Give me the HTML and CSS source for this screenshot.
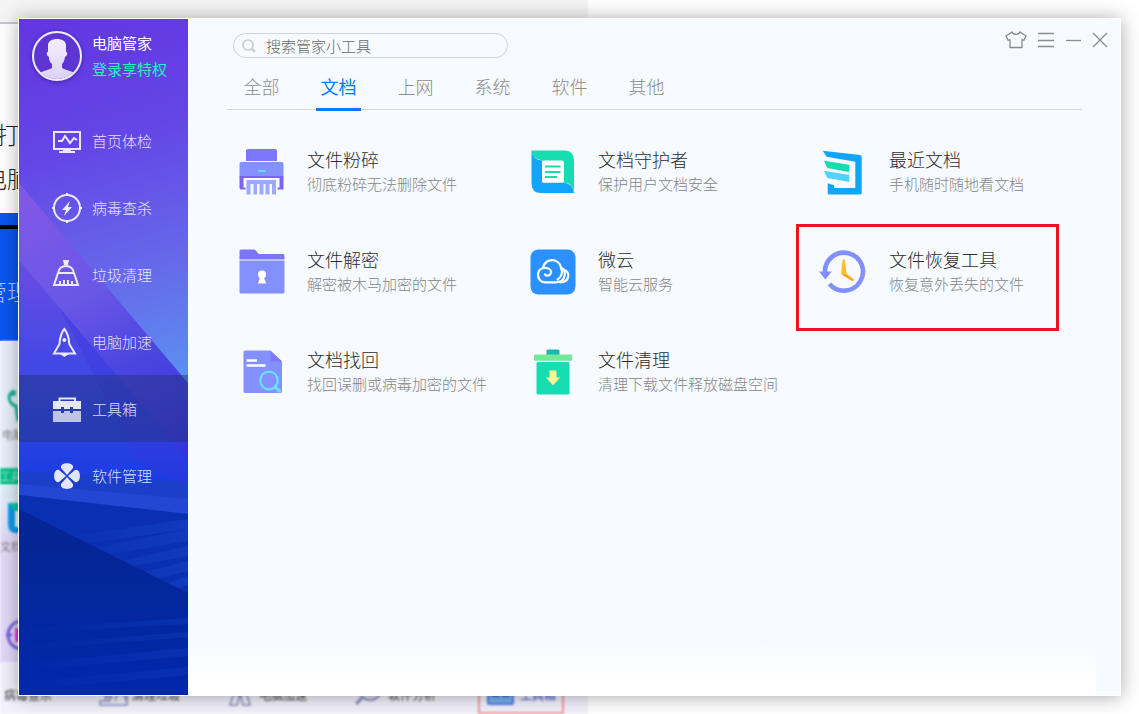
FILE: index.html
```html
<!DOCTYPE html>
<html lang="zh-CN">
<head>
<meta charset="utf-8">
<title>电脑管家</title>
<link rel="stylesheet" href="styles.css">
</head>
<body>
<div class="desktop">
  <div class="backdrop" aria-hidden="true">
    <div class="page">
      <div class="page-head"></div>
      <div class="page-text"><p>打</p><p class="cut">电脑</p></div>
      <div class="page-banner"><span class="cut">管理</span></div>
      <div class="page-card">
        <svg class="scope" width="24" height="36" viewBox="0 0 24 36"><path d="M12 3C7 5 9 14 16 16L18 30H24" fill="none" stroke="#16b295" stroke-width="3"/><circle cx="13" cy="3" r="3" fill="#16b295"/></svg>
        <span>电脑</span>
      </div>
      <div class="page-label"><span>工具</span></div>
      <div class="page-tools">
        <svg class="guard" width="24" height="30" viewBox="0 0 24 30"><path d="M0 0H24V30H8Q0 30 0 21Z" fill="#0e9bee"/><path d="M0 0H24V8H7Z" fill="#0cc9a0"/><path d="M7 8H24V24H7Z" fill="#eafaf8"/><path d="M11 12H24M11 16H24M11 20H24" stroke="#1bc8a4" stroke-width="2"/></svg>
        <span>文档</span>
        <svg class="target" width="24" height="34" viewBox="0 0 24 34"><circle cx="16" cy="17" r="14" fill="none" stroke="#7a62e0" stroke-width="3"/><path d="M0 17H6" stroke="#7a62e0" stroke-width="3"/><path d="M9 10H24V24H9Z" fill="#e735dc"/></svg>
      </div>
      <div class="page-foot">
        <div class="foot-item"><span>病毒查杀</span></div>
        <div class="foot-item"><svg width="30" height="24" viewBox="0 0 30 24"><path d="M8 2V18M12 2V18H2V22H29V6M6 14H15M18 18A5 5 0 1 1 27 18" fill="none" stroke="#8b8fc0" stroke-width="1.5"/></svg><span>清理垃圾</span></div>
        <div class="foot-item"><svg width="27" height="24" viewBox="0 0 27 24"><path d="M8 4L2 22H9L12 11L15 22H22L17 4M9 12H15" fill="none" stroke="#8b8fc0" stroke-width="1.5"/></svg><span>电脑加速</span></div>
        <div class="foot-item"><svg width="30" height="24" viewBox="0 0 30 24"><circle cx="16" cy="6" r="11" fill="none" stroke="#8b8fc0" stroke-width="2"/><circle cx="16" cy="6" r="6" fill="none" stroke="#8b8fc0" stroke-width="2"/><path d="M8 15L2 21" stroke="#8b8fc0" stroke-width="3"/></svg><span>软件分析</span></div>
        <div class="foot-item marked"><svg width="30" height="24" viewBox="0 0 30 24"><rect x="2" y="1" width="25" height="20" rx="1" fill="#79b4ee" stroke="#5a78e8" stroke-width="2"/><path d="M7 10V13H12V9M17 10V13H22V9" fill="none" stroke="#3f5fe0" stroke-width="2"/></svg><span>工具箱</span></div>
      </div>
    </div>
  </div>

  <div class="window">
    <aside class="sidebar">
      <svg class="art" viewBox="0 0 169 676" preserveAspectRatio="none" aria-hidden="true">
        <defs>
          <linearGradient id="sky" gradientUnits="userSpaceOnUse" x1="20" y1="0" x2="130" y2="370"><stop offset="0" stop-color="#6236e2"/><stop offset=".35" stop-color="#6446e6"/><stop offset=".7" stop-color="#6669ea"/><stop offset="1" stop-color="#5b90f0"/></linearGradient>
          <linearGradient id="band" gradientUnits="userSpaceOnUse" x1="0" y1="170" x2="150" y2="450"><stop offset="0" stop-color="#8258e8"/><stop offset=".4" stop-color="#6957e6"/><stop offset=".65" stop-color="#4b45df"/><stop offset="1" stop-color="#3432dc"/></linearGradient>
          <linearGradient id="low" gradientUnits="userSpaceOnUse" x1="0" y1="241" x2="0" y2="470"><stop offset="0" stop-color="#6a4ce4"/><stop offset=".5" stop-color="#3f48e4"/><stop offset="1" stop-color="#173ce0"/></linearGradient>
          <linearGradient id="deep" x1="0" y1="0" x2="0" y2="1"><stop offset="0" stop-color="#062492"/><stop offset=".5" stop-color="#04279e"/><stop offset="1" stop-color="#0028ac"/></linearGradient>
          <linearGradient id="ray" x1="0" y1="0" x2="1" y2="0"><stop offset="0" stop-color="#1545c8" stop-opacity="0"/><stop offset="1" stop-color="#1545c8" stop-opacity=".5"/></linearGradient>
        </defs>
        <path fill="url(#sky)" d="M0 0H169V370H0Z"/>
        <path fill="url(#band)" d="M0 164L169 364V460H0Z"/>
        <path fill="url(#low)" d="M0 241L169 441V490H0Z"/>
        <path fill="#3a34de" fill-opacity=".35" d="M40 288L169 441V470L118 440Z"/>
        <path fill="#1b3fc8" d="M0 452L169 463V510H0Z"/>
        <path fill="#2346d4" d="M0 465L169 480V495L0 476Z"/>
        <path fill="#0a30b2" d="M0 476L169 495V600H0Z"/>
        <path fill="url(#ray)" d="M35 520L169 500V510L48 527ZM60 532L169 510V522L72 538ZM85 546L169 527V537L97 550ZM110 557L169 542V552L123 563ZM135 569L169 557V566L145 573Z"/>
        <path fill="url(#deep)" d="M0 490L169 574V676H0Z"/>
        <path fill="url(#ray)" fill-opacity=".6" d="M0 610L169 599V605L0 614ZM0 626L169 613V618L0 631ZM0 645L169 629V637L0 652ZM0 664L169 648V656L0 671Z"/>
      </svg>

      <div class="account">
        <svg class="avatar" viewBox="0 0 50 50" role="img" aria-label="头像">
          <defs><clipPath id="disc"><circle cx="25" cy="25" r="23"/></clipPath><linearGradient id="bust" x1="0" y1="0" x2="0" y2="1"><stop offset="0" stop-color="#f3f0fe"/><stop offset="1" stop-color="#d9d0f7"/></linearGradient></defs>
          <circle cx="25" cy="25" r="23" fill="#5c35d2"/>
          <path clip-path="url(#disc)" fill="url(#bust)" d="M16 14C16 6 34 6 34 14L34 21C36 21 35.500 25 33 26C32 31 31 32 30 33V37C35 40 42 40 46 45V50H4V45C8 40 15 40 20 37V33C18 31 17 30 17 26C14.500 25 14 21 16 21Z"/>
          <circle cx="25" cy="25" r="24" fill="none" stroke="#f1edff" stroke-width="2"/>
        </svg>
        <div class="who"><strong>电脑管家</strong><a href="#login">登录享特权</a></div>
      </div>

      <nav class="menu">
        <a href="#home"><svg viewBox="0 0 30 30"><path d="M2 6H28V23H2Z" fill="none" stroke="currentColor" stroke-width="2"/><path d="M6 15H10L13 10L18 17L22 12L25 14" fill="none" stroke="currentColor" stroke-width="2"/><path d="M11 24H19V25H23V27H7V25H11Z" fill="currentColor"/></svg>首页体检</a>
        <a href="#virus"><svg viewBox="0 0 30 30"><circle cx="15" cy="15" r="13" fill="none" stroke="currentColor" stroke-width="2"/><path d="M15 0V3M15 27V30M0 15H3M27 15H30" stroke="currentColor" stroke-width="2"/><path d="M18 8L10 17H14L12 23L20 14H16Z" fill="currentColor"/></svg>病毒查杀</a>
        <a href="#clean"><svg viewBox="0 0 30 30"><path d="M11 0H17L16 5H12Z" fill="currentColor"/><path d="M2 25L6 13C7 8 10 6 14 6S21 8 22 13L26 25ZM6 13H22M8 25V21M12 25V20M16 25V20M20 25V21" fill="none" stroke="currentColor" stroke-width="2"/></svg>垃圾清理</a>
        <a href="#speed"><svg viewBox="0 0 30 30"><path d="M12.300 2C8 7 8 12 7.500 17L2 26.500H23L17.300 17C17 12 16.500 7 12.300 2Z" fill="none" stroke="currentColor" stroke-width="2"/><circle cx="12.300" cy="13" r="2" fill="currentColor"/><path d="M8 27H17L12.300 30Z" fill="currentColor"/></svg>电脑加速</a>
        <a href="#tools" class="on" aria-current="page"><svg viewBox="0 0 30 30"><path d="M7.500 8V4.500H23V8" fill="none" stroke="currentColor" stroke-width="2"/><path fill="currentColor" d="M1 7H29V15H21V13H18V15H12V13H9V15H1Z"/><path fill="currentColor" fill-opacity=".8" d="M1 17H9V19H12V17H18V19H21V17H29V28H1Z"/></svg>工具箱</a>
        <a href="#software"><svg viewBox="0 0 30 30" fill="currentColor"><path id="petal" d="M15 14L9 7C7 .5 23 .5 21 7Z"/><use href="#petal" transform="rotate(90 15 15)"/><use href="#petal" transform="rotate(180 15 15)"/><use href="#petal" transform="rotate(270 15 15)"/></svg>软件管理</a>
      </nav>
    </aside>

    <main class="main">
      <header class="top">
        <label class="search">
          <svg viewBox="0 0 14 14" aria-hidden="true"><circle cx="6" cy="6" r="5" fill="none" stroke="currentColor" stroke-width="1.700"/><path d="M10 10L13 13" stroke="currentColor" stroke-width="2.500"/></svg>
          <input type="text" placeholder="搜索管家小工具" aria-label="搜索管家小工具">
        </label>
        <div class="controls">
          <button type="button" aria-label="换肤"><svg width="22" height="18" viewBox="0 0 22 18"><path d="M7 1C8 4 14 4 15 1L21 5L19 9H17V16.500H5V9H3L1 5Z"/></svg></button>
          <button type="button" aria-label="菜单"><svg width="16" height="18" viewBox="0 0 16 18"><path d="M0 2.500H16M0 9.500H16M0 15.500H16"/></svg></button>
          <button type="button" aria-label="最小化"><svg width="16" height="18" viewBox="0 0 16 18"><path d="M1 9.500H16"/></svg></button>
          <button type="button" aria-label="关闭"><svg width="16" height="18" viewBox="0 0 16 18"><path d="M1 2L15 16M15 2L1 16"/></svg></button>
        </div>
      </header>

      <div class="tabs" role="tablist">
        <button type="button" role="tab">全部</button>
        <button type="button" role="tab" class="on" aria-selected="true">文档</button>
        <button type="button" role="tab">上网</button>
        <button type="button" role="tab">系统</button>
        <button type="button" role="tab">软件</button>
        <button type="button" role="tab">其他</button>
      </div>

      <div class="grid">
        <a class="card" href="#shred">
          <svg viewBox="0 0 48 48"><rect x="8" y="1" width="31" height="14" rx="2" fill="#7d78fb"/><rect x="1" y="13" width="45" height="2" fill="#f7faff"/><rect x="1.500" y="14" width="44" height="16" rx="2" fill="#8590ff"/><path fill="#7b62f8" d="M1.500 28H45.500V41.500H39.500V39.500H41.500V30H5.500V39.500H7.500V41.500H2.500L1.500 40Z"/><rect x="20" y="22" width="8" height="2" rx="1" fill="#5fe3f3"/><path fill="#9da9ff" d="M8.500 32H38V46.500H34V36H31.500V46.500H27.500V36H25.500V46.500H21.500V36H19V46.500H15.500V36H12.500V46.500H8.500Z"/></svg>
          <span class="info"><b>文件粉碎</b><small>彻底粉碎无法删除文件</small></span>
        </a>
        <a class="card" href="#guard">
          <svg viewBox="0 0 48 48"><path fill="#16dcb1" d="M2.500 2.500H36Q45 2.500 45 13V45Q44 35 35 34.500L13 12.500Q3 11 2.500 2.500Z"/><path fill="#12a5fc" d="M2.500 2.500Q4 12 13 12.500V34.500H35Q44 36 45 45H12Q2.500 45 2.500 35Z"/><rect x="13" y="12.500" width="22" height="22" rx="2" fill="#fff"/><path d="M16 18.500H31.500M16 24H31.500M16 29H28" stroke="#16dcb1" stroke-width="2.200"/></svg>
          <span class="info"><b>文档守护者</b><small>保护用户文档安全</small></span>
        </a>
        <a class="card" href="#recent">
          <svg viewBox="0 0 48 48"><path fill="#12a5fc" d="M2.700 2.700L40 7Q41.700 7.500 41.700 9V45Q41.700 46.500 40 46.500H9Q7.700 46.500 7.700 45V35.300L14 37.300V40H35.300V13.700L6.700 8.700Z"/><path fill="#16dcb1" d="M4 12.700L29.300 16.700V24L7.300 20Z"/><path fill="#52d2ff" d="M4 22.700L29.300 27V34L7.300 30Z"/></svg>
          <span class="info"><b>最近文档</b><small>手机随时随地看文档</small></span>
        </a>
        <a class="card" href="#decrypt">
          <svg viewBox="0 0 48 48"><path fill="#7b76f8" d="M1.500 3Q1.500 1.500 3 1.500H16Q18 1.500 19 4T22 6H45Q46.500 6 46.500 8V11.500H1.500Z"/><path fill="#8590ff" d="M1.500 12.500H46.500V44Q46.500 45.500 45 45.500H3Q1.500 45.500 1.500 44Z"/><circle cx="24" cy="26.500" r="4" fill="#fff"/><path fill="#fff" d="M22.500 28H25.500L28 35.500H20Z"/></svg>
          <span class="info"><b>文件解密</b><small>解密被木马加密的文件</small></span>
        </a>
        <a class="card" href="#weiyun">
          <svg viewBox="0 0 48 48"><rect x="1.500" y="1.500" width="45" height="45" rx="8" fill="#2b91ff"/><g fill="none" stroke="#fff" stroke-width="2.200" stroke-linecap="round"><path d="M16 26.500C18 29 22.500 27 22 23.500C21 18.500 9 18 9 27C9 31 12 34.300 16 34.300H27C38 34 37.500 21 32 19.500M14 19.500C17 9.500 30 10 32 19.500C34.500 26 31 30 28.500 31.500M34 21.500C42 23 41 34.300 31 34.300"/></g></svg>
          <span class="info"><b>微云</b><small>智能云服务</small></span>
        </a>
        <a class="card marked" href="#recover">
          <svg viewBox="0 0 48 48"><path d="M5 25A19 19 0 1 1 9.500 36" fill="none" stroke="#828fff" stroke-width="4.600"/><path fill="#828fff" d="M-1 23.500H11.700L5.300 31.500Z"/><path fill="#ffa31a" d="M24 24L34 31.500L33 33.500L21.500 26.500Z"/><path fill="#ffbe2e" d="M22.500 12.500Q23.700 10 25 12.500L26.500 24.500L23.500 28L21 26Z"/></svg>
          <span class="info"><b>文件恢复工具</b><small>恢复意外丢失的文件</small></span>
        </a>
        <a class="card" href="#retrieve">
          <svg viewBox="0 0 48 48"><path fill="#8590ff" d="M7 2.500H32.500L44 13.500V43.500Q44 45 42.500 45H7Q5.500 45 5.500 43.500V4Q5.500 2.500 7 2.500Z"/><path fill="#7f78fb" d="M32.500 3V13.500H44Z"/><path d="M8.500 12.500H19M8.500 17.500H27.500" stroke="#fff" stroke-width="2.400"/><circle cx="31" cy="32.500" r="8.800" fill="none" stroke="#64e1fb" stroke-width="2.200"/><path d="M37 39L41.500 43" stroke="#64e1fb" stroke-width="3.500" stroke-linecap="round"/></svg>
          <span class="info"><b>文档找回</b><small>找回误删或病毒加密的文件</small></span>
        </a>
        <a class="card" href="#sweep">
          <svg viewBox="0 0 48 48"><path fill="#15b9b1" d="M17.500 7V3Q17.500 1.500 19 1.500H29Q30.500 1.500 30.500 3V7Z"/><rect x="5" y="6.500" width="38" height="6.200" rx="1" fill="#74e899"/><rect x="7.500" y="14" width="33" height="32.500" rx="1.500" fill="#16dcb1"/><path fill="#f9f593" d="M20.500 22.500H27.500V29.500H31L24 37.500L17 29.500H20.500Z"/></svg>
          <span class="info"><b>文件清理</b><small>清理下载文件释放磁盘空间</small></span>
        </a>
      </div>
    </main>
  </div>
</div>
</body>
</html>
```
FILE: styles.css
```css
* { box-sizing: border-box; }

body {
  margin: 0;
  background: #fff;
  font-family: "Noto Sans CJK SC", "Noto Sans", sans-serif;
  font-weight: 300;
  color: #444;
}

a { color: inherit; text-decoration: none; }
button { padding: 0; border: 0; background: none; font: inherit; color: inherit; cursor: pointer; }
svg { flex: none; display: block; overflow: visible; }

/* Backdrop and window share one grid cell */
.desktop { display: grid; grid-template-columns: minmax(0, 1fr); min-height: 100vh; overflow: hidden; }
.backdrop, .window { grid-area: 1 / 1; }

.backdrop { display: flex; overflow: hidden; max-height: 100vh; }
.page { display: flex; flex-direction: column; width: 588px; }
.page-head { flex: none; height: 24px; background: #f4f4f4; border-bottom: 2px solid #c6c6cc; }
.page-text { flex: none; height: 189px; padding-top: 88px; background: #fff; font-size: 24px; line-height: 44px; color: #222; }
.page-text p { margin: 0 0 0 -4px; }
.page-text .cut { margin-left: -17px; }
.page-banner { flex: none; height: 128px; padding-top: 60px; background: linear-gradient(#0a55f0 12px, #000 12px, #000 16px, #0a55f0 16px); color: #a9c6fb; font-size: 24px; line-height: 36px; }
.page-banner .cut { display: block; margin-left: -17px; }
.page-card { flex: none; height: 127px; padding-top: 49px; background: #e8f0fb; color: #555; font-size: 11px; line-height: 16px; filter: blur(1px); }
.page-card span { display: block; padding-left: 2px; }
.page-label { flex: none; height: 17px; background: #0cc48f; color: #d6fbee; font-size: 11px; line-height: 16px; filter: blur(1px); }
.page-tools { flex: none; height: 178px; padding-top: 18px; background: linear-gradient(#dff2fa, #e2d9f8 60px); color: #555; font-size: 11px; line-height: 16px; filter: blur(1px); }
.guard { margin-left: 8px; }
.page-tools span { display: block; margin: 5px 0 64px; }
.target { margin-left: 6px; }
.page-foot {
  flex: 1;
  display: grid;
  grid-template-columns: 94px 130px 126px 124px 86px;
  align-items: end;
  padding-left: 4px;
  background: #f3f1fb;
  color: #444;
  font-size: 12px;
  font-weight: 400;
  line-height: 20px;
  filter: blur(1px);
}
.foot-item { display: flex; align-items: center; gap: 4px; height: 38px; }
.foot-item.marked { padding-left: 6px; border: 2px solid #f0989c; color: #4552d8; }

.window {
  display: grid;
  grid-template-columns: 169px minmax(0, 1fr);
  z-index: 1;
  margin: 18px;
  border: 1px solid #fff;
  background: #f7faff;
  box-shadow: 0 1px 18px rgba(0, 0, 0, 0.34);
}

/* Sidebar */
.sidebar { position: relative; color: #fff; }
.art { position: absolute; inset: 0; width: 100%; height: 100%; overflow: hidden; }
.account { position: relative; display: flex; align-items: flex-start; gap: 10px; height: 88px; padding: 11px 0 0 13px; }
.avatar { width: 50px; height: 50px; margin-top: 1px; border-radius: 50%; box-shadow: 0 1px 4px rgba(30, 10, 90, 0.5); }
.who { display: flex; flex-direction: column; font-size: 15px; line-height: 26px; }
.who strong { font-weight: 400; }
.who a { color: #26f5b4; font-weight: 400; }
.menu { position: relative; }
.menu a { display: flex; align-items: center; gap: 10px; height: 67px; padding-left: 33px; color: rgba(255, 255, 255, 0.85); font-size: 15px; }
.menu a.on { background: rgba(34, 50, 120, 0.45); }
.menu svg { width: 30px; height: 30px; color: rgba(255, 255, 255, 0.87); }

/* Main panel */
.main { background: linear-gradient(rgba(255, 255, 255, 0), #fff 80%) left bottom / calc(100% - 24px) 56px no-repeat; }
.top { display: flex; justify-content: space-between; align-items: flex-start; padding: 14px 12px 0 45px; }
.search { display: flex; align-items: center; gap: 10px; width: 275px; height: 25px; padding: 0 8px; border: 1px solid #cfd2d6; border-radius: 13px; color: #cccdd0; }
.search svg { width: 14px; height: 14px; }
.search input { flex: 1; min-width: 0; padding: 0; border: 0; outline: 0; background: none; font: inherit; font-size: 15px; line-height: 22px; color: #666; }
.search input::placeholder { color: #666; opacity: 1; }
.controls { display: flex; gap: 11px; margin-top: -2px; }
.controls svg { fill: none; stroke: #8b8b8b; stroke-width: 1.3; }

.tabs { display: flex; gap: 32px; margin: 14px 38px 0 39px; padding-left: 12px; border-bottom: 1px solid #d3d7dd; }
.tabs button { width: 45px; height: 39px; margin-bottom: -2px; padding-bottom: 8px; border-bottom: 3px solid transparent; color: #8c8c8c; font-size: 18px; line-height: 26px; white-space: nowrap; }
.tabs .on { border-bottom-color: #067bff; color: #067bff; font-weight: 400; }

.grid { display: grid; grid-template-columns: repeat(3, minmax(0, 1fr)); row-gap: 50px; padding: 37px 9px 37px 50px; }
.card { position: relative; display: flex; gap: 21px; align-items: center; height: 50px; }
.card svg { width: 48px; height: 48px; }
.info { display: flex; flex-direction: column; white-space: nowrap; }
.info b { font-weight: 300; font-size: 18px; line-height: 24px; color: #2c2c2c; }
.info small { font-size: 15px; line-height: 26px; color: #858585; }
.card.marked::after { content: ""; position: absolute; inset: -23px 52px -34px -24px; border: 3px solid #ed1320; }
```
